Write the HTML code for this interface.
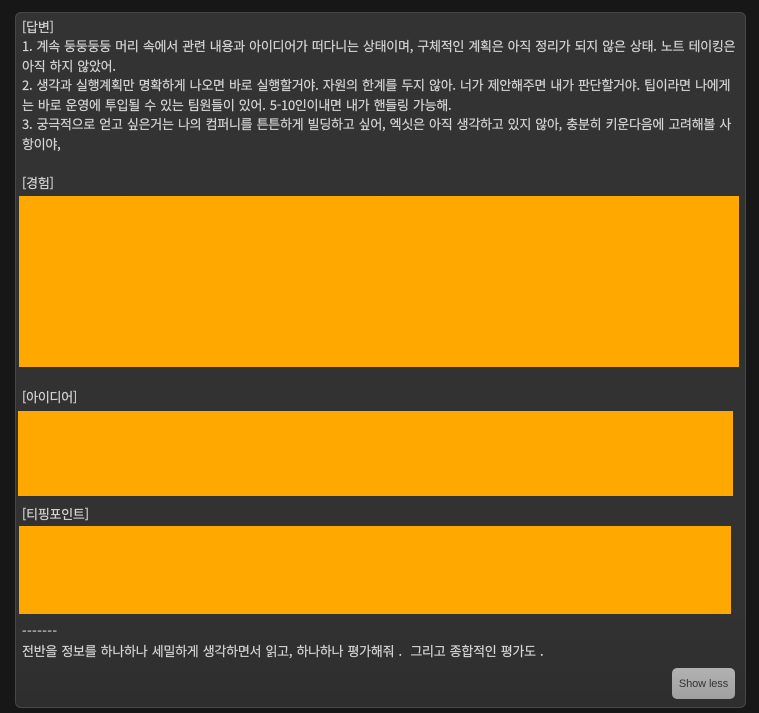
<!DOCTYPE html>
<html lang="ko"><head><meta charset="utf-8"><style>
html,body{margin:0;padding:0;width:759px;height:713px;overflow:hidden;background:#171717}
#card{position:absolute;left:15px;top:12px;width:729px;height:694px;background:linear-gradient(#333 0,#323232 85%,#2e2e2e 100%);border:1px solid #474747;border-radius:6px}
.t{position:absolute;left:22px;white-space:pre;font:13px/20px "Noto Sans CJK KR",sans-serif;letter-spacing:-.26px;word-spacing:.85px;color:#d6d6d6;-webkit-text-stroke:.15px #d6d6d6}
.o{position:absolute;background:#ffa800}
#btn{position:absolute;left:672px;top:668px;width:63px;height:31px;border-radius:5px;background:linear-gradient(#b2b2b2,#a0a0a0);color:#333;font:11px/33px "Liberation Sans",sans-serif;letter-spacing:-.1px;text-align:center}
</style></head><body>
<div id="card"></div>
<div class="t" style="top:17px">[답변]</div>
<div class="t" style="top:36px">1. 계속 둥둥둥둥 머리 속에서 관련 내용과 아이디어가 떠다니는 상태이며, 구체적인 계획은 아직 정리가 되지 않은 상태. 노트 테이킹은</div>
<div class="t" style="top:56px">아직 하지 않았어.</div>
<div class="t" style="top:75px">2. 생각과 실행계획만 명확하게 나오면 바로 실행할거야. 자원의 한계를 두지 않아. 너가 제안해주면 내가 판단할거야. 팁이라면 나에게</div>
<div class="t" style="top:95px">는 바로 운영에 투입될 수 있는 팀원들이 있어. 5-10인이내면 내가 핸들링 가능해.</div>
<div class="t" style="top:114px">3. 궁극적으로 얻고 싶은거는 나의 컴퍼니를 튼튼하게 빌딩하고 싶어, 엑싯은 아직 생각하고 있지 않아, 충분히 키운다음에 고려해볼 사</div>
<div class="t" style="top:134px">항이야,</div>
<div class="t" style="top:173px">[경험]</div>
<div class="o" style="left:19px;top:196px;width:720px;height:171px"></div>
<div class="t" style="top:387px">[아이디어]</div>
<div class="o" style="left:18px;top:411px;width:715px;height:85px"></div>
<div class="t" style="top:504px">[티핑포인트]</div>
<div class="o" style="left:19px;top:526px;width:712px;height:88px"></div>
<div class="t" style="top:621px;letter-spacing:.55px">-------</div>
<div class="t" style="top:641px">전반을 정보를 하나하나 세밀하게 생각하면서 읽고, 하나하나 평가해줘 .  그리고 종합적인 평가도 .</div>
<div id="btn">Show less</div>
</body></html>
